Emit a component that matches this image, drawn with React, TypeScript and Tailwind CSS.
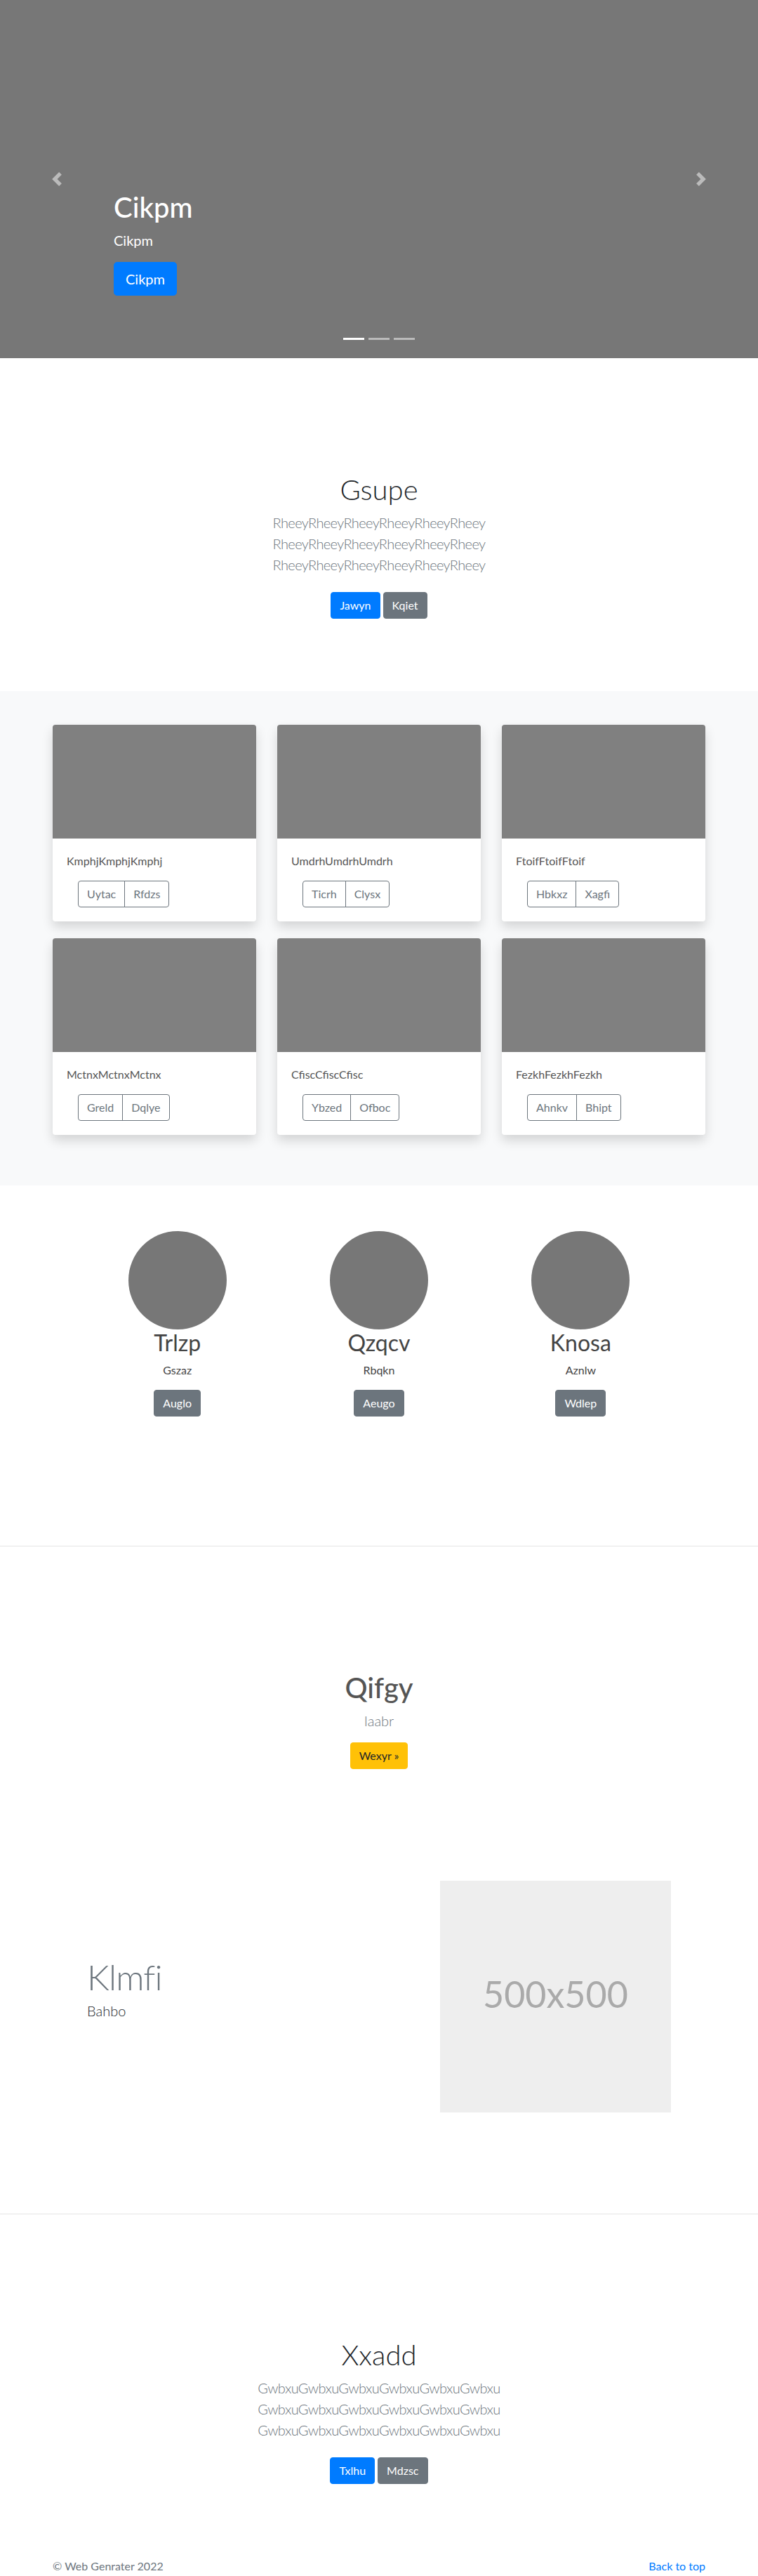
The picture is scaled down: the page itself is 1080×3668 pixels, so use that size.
import React from "react";

const repeat = (word: string, n: number) => Array.from({ length: n }, () => word).join("");

const cards = [
  { title: "KmphjKmphjKmphj", actions: ["Uytac", "Rfdzs"] },
  { title: "UmdrhUmdrhUmdrh", actions: ["Ticrh", "Clysx"] },
  { title: "FtoifFtoifFtoif", actions: ["Hbkxz", "Xagfi"] },
  { title: "MctnxMctnxMctnx", actions: ["Greld", "Dqlye"] },
  { title: "CfiscCfiscCfisc", actions: ["Ybzed", "Ofboc"] },
  { title: "FezkhFezkhFezkh", actions: ["Ahnkv", "Bhipt"] },
];

const people = [
  { name: "Trlzp", role: "Gszaz", action: "Auglo" },
  { name: "Qzqcv", role: "Rbqkn", action: "Aeugo" },
  { name: "Knosa", role: "Aznlw", action: "Wdlep" },
];

function Chevron({ dir }: { dir: "left" | "right" }) {
  return (
    <svg width="20" height="20" viewBox="0 0 8 8" fill="#fff" aria-hidden="true">
      {dir === "left" ? (
        <path d="M5.25 0l-4 4 4 4 1.5-1.5L4.25 4l2.5-2.5L5.25 0z" />
      ) : (
        <path d="M2.75 0l-1.5 1.5L3.75 4l-2.5 2.5L2.75 8l4-4-4-4z" />
      )}
    </svg>
  );
}

function Btn({ children, tone }: { children: React.ReactNode; tone: "primary" | "secondary" | "warning" }) {
  const tones = {
    primary: "bg-[#007bff] border-[#007bff] text-white",
    secondary: "bg-[#6c757d] border-[#6c757d] text-white",
    warning: "bg-[#ffc107] border-[#ffc107] text-[#212529]",
  };
  return (
    <a href="#" className={`inline-block rounded-[0.25rem] border px-3 py-1.5 text-base leading-normal ${tones[tone]}`}>
      {children}
    </a>
  );
}

function Hero() {
  return (
    <section className="relative flex h-[510px] flex-col justify-end overflow-hidden bg-[#777] px-[15%] pb-[89px] text-white">
      <a href="#" className="absolute inset-y-0 left-0 flex w-[15%] items-center justify-center opacity-50">
        <Chevron dir="left" />
      </a>
      <a href="#" className="absolute inset-y-0 right-0 flex w-[15%] items-center justify-center opacity-50">
        <Chevron dir="right" />
      </a>
      <h1 className="mb-2 text-[40px] font-medium leading-[1.2]">Cikpm</h1>
      <p className="mb-4 text-xl leading-normal">Cikpm</p>
      <p>
        <a href="#" className="inline-block rounded-[0.3rem] border border-[#007bff] bg-[#007bff] px-4 py-2 text-xl leading-normal text-white">
          Cikpm
        </a>
      </p>
      <div className="absolute bottom-[26px] left-0 right-0 flex justify-center gap-[6px]">
        <span className="h-[3px] w-[30px] bg-white" />
        <span className="h-[3px] w-[30px] bg-white/50" />
        <span className="h-[3px] w-[30px] bg-white/50" />
      </div>
    </section>
  );
}

function Intro({ title, word, primary, secondary }: { title: string; word: string; primary: string; secondary: string }) {
  return (
    <div className="text-center">
      <h1 className="mb-2 text-[40px] font-light leading-[1.2]">{title}</h1>
      <p className="mb-4 text-xl font-light leading-normal tracking-[-0.03em] text-[#6c757d]">
        <span className="block">{repeat(word, 6)}</span>
        <span className="block">{repeat(word, 6)}</span>
        <span className="block">{repeat(word, 6)}</span>
      </p>
      <p className="flex justify-center gap-1 py-2">
        <Btn tone="primary">{primary}</Btn>
        <Btn tone="secondary">{secondary}</Btn>
      </p>
    </div>
  );
}

function Album() {
  return (
    <section className="bg-[#f8f9fa] py-12">
      <div className="mx-auto grid w-[960px] grid-cols-3 gap-x-[30px] px-[15px]">
        {cards.map((c) => (
          <div key={c.title} className="mb-6 overflow-hidden rounded-[0.25rem] bg-white shadow-[0_0.5rem_1rem_rgba(0,0,0,0.15)]">
            <div className="h-[162px] bg-[#808080]" />
            <div className="p-5">
              <p className="mb-4 text-base leading-normal text-[#555]">{c.title}</p>
              <div className="ml-4 inline-flex">
                <button className="rounded-l-[0.25rem] border border-[#6c757d] px-3 py-1.5 text-base leading-normal text-[#6c757d]">
                  {c.actions[0]}
                </button>
                <button className="-ml-px rounded-r-[0.25rem] border border-[#6c757d] px-3 py-1.5 text-base leading-normal text-[#6c757d]">
                  {c.actions[1]}
                </button>
              </div>
            </div>
          </div>
        ))}
      </div>
    </section>
  );
}

function Team() {
  return (
    <section className="pt-[65px] pb-[168px]">
      <div className="mx-auto grid w-[862px] grid-cols-3">
        {people.map((p) => (
          <div key={p.name} className="flex flex-col items-center px-[15px] text-center">
            <div className="size-[140px] rounded-full bg-[#777]" />
            <h2 className="mb-2 text-[32px] font-normal leading-[1.2] text-[#444]">{p.name}</h2>
            <p className="mb-4 text-base leading-normal text-[#444]">{p.role}</p>
            <p className="mb-4">
              <Btn tone="secondary">{p.action}</Btn>
            </p>
          </div>
        ))}
      </div>
    </section>
  );
}

function Feature() {
  return (
    <section className="pt-[177px] pb-[144px]">
      <div className="text-center">
        <h1 className="mb-2 text-[40px] font-medium leading-[1.2] text-[#555]">Qifgy</h1>
        <p className="mb-4 text-xl font-light leading-normal text-[#6c757d]">Iaabr</p>
        <Btn tone="warning">Wexyr »</Btn>
      </div>
      <div className="mx-auto mt-[159px] flex w-[862px] items-start">
        <div className="w-7/12 px-[15px]">
          <h2 className="mt-28 mb-2 text-[50px] font-light leading-none tracking-[-0.05rem] text-[#6c757d]">Klmfi</h2>
          <p className="text-xl font-light leading-normal">Bahbo</p>
        </div>
        <div className="w-5/12 px-[15px]">
          <div className="flex aspect-square items-center justify-center bg-[#eee] pb-2 text-[52px] leading-none text-[#aaa]">
            500x500
          </div>
        </div>
      </div>
    </section>
  );
}

export default function App() {
  return (
    <div className="min-h-screen bg-white font-['Segoe_UI','Lato','Helvetica_Neue',Arial,sans-serif] text-base leading-normal text-[#212529]">
      <Hero />
      <section className="pt-[163px] pb-[95px]">
        <Intro title="Gsupe" word="Rheey" primary="Jawyn" secondary="Kqiet" />
      </section>
      <Album />
      <Team />
      <hr className="border-black/10" />
      <Feature />
      <hr className="border-black/10" />
      <section className="pt-[176px]">
        <Intro title="Xxadd" word="Gwbxu" primary="Txlhu" secondary="Mdzsc" />
      </section>
      <footer className="pt-[97px]">
        <div className="mx-auto flex w-[960px] justify-between px-[15px] text-[#6c757d]">
          <p className="leading-6">© Web Genrater 2022</p>
          <a href="#" className="leading-6 text-[#007bff]">Back to top</a>
        </div>
      </footer>
    </div>
  );
}
